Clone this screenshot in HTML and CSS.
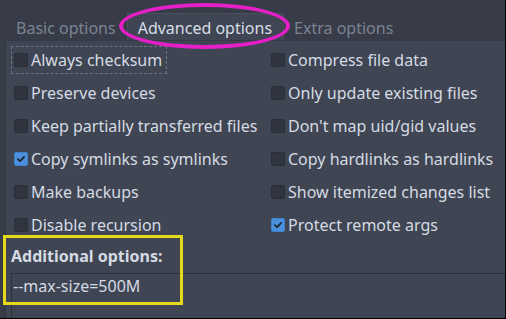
FILE: index.html
```html
<!DOCTYPE html>
<html>
<head>
<meta charset="utf-8">
<link rel="stylesheet" href="styles.css">
</head>
<body>
<div class="app">
  <div class="tabs">
    <div class="tab">Basic options</div>
    <div class="tab active">Advanced options</div>
    <div class="tab">Extra options</div>
  </div>
  <div class="panel">
    <div class="grid">
      <label class="opt focus"><span class="box"></span>Always checksum</label>
      <label class="opt"><span class="box"></span>Compress file data</label>
      <label class="opt"><span class="box"></span>Preserve devices</label>
      <label class="opt"><span class="box"></span>Only update existing files</label>
      <label class="opt"><span class="box"></span>Keep partially transferred files</label>
      <label class="opt"><span class="box"></span>Don't map uid/gid values</label>
      <label class="opt"><span class="box checked"><svg viewBox="0 0 14 14"><path d="M3.5 7.2 L6 9.6 L10.6 4.6" /></svg></span>Copy symlinks as symlinks</label>
      <label class="opt"><span class="box"></span>Copy hardlinks as hardlinks</label>
      <label class="opt"><span class="box"></span>Make backups</label>
      <label class="opt"><span class="box"></span>Show itemized changes list</label>
      <label class="opt"><span class="box"></span>Disable recursion</label>
      <label class="opt"><span class="box checked"><svg viewBox="0 0 14 14"><path d="M3.5 7.2 L6 9.6 L10.6 4.6" /></svg></span>Protect remote args</label>
    </div>
    <div class="addl">Additional options:</div>
    <div class="field">--max-size=500M</div>
  </div>
  <div class="mark-ellipse"></div>
  <div class="mark-rect"></div>
</div>
</body>
</html>
```
FILE: styles.css
```css
html, body {
  margin: 0;
  padding: 0;
  background: #000;
}
.app {
  position: relative;
  width: 505px;
  height: 318px;
  background: #373c48;
  overflow: hidden;
  font-family: "Noto Sans", "DejaVu Sans", sans-serif;
  font-size: 16px;
  color: #d5dbe4;
  display: flex;
  flex-direction: column;
}
.tabs {
  display: flex;
  height: 40px;
  padding-left: 6px;
  align-items: flex-end;
  box-sizing: border-box;
}
.tab {
  height: 27px;
  padding: 3px 10px 0;
  line-height: 24px;
  color: #7c8392;
  box-sizing: border-box;
  white-space: nowrap;
}
.tab.active {
  margin-left: 1px;
  padding: 3px 11px 0 10px;
  line-height: 23px;
  color: #d8dee7;
  background: #3f4552;
  border: 1px solid #4a505d;
  border-bottom: none;
}
.panel {
  flex: 1;
  margin-left: 5px;
  background: #3f4552;
  border-left: 1px solid #30353f;
  border-top: 1px solid #353a45;
  padding: 2px 0 0 5px;
  display: flex;
  flex-direction: column;
}
.grid {
  display: grid;
  grid-template-columns: 257px 1fr;
  grid-auto-rows: 33px;
}
.opt {
  display: flex;
  align-items: center;
  align-self: center;
  justify-self: start;
  height: 28px;
  padding: 0 4px 0 2px;
  border: 1px dashed transparent;
  box-sizing: border-box;
  white-space: nowrap;
}
.opt.focus {
  border-color: #6c727e;
}
.box {
  width: 14px;
  height: 14px;
  margin-right: 3px;
  border-radius: 2px;
  background: #2f343f;
  border: 1px solid #2a2e37;
  box-sizing: border-box;
  display: flex;
}
.box.checked {
  background: #4a90dd;
  border-color: #3f82cc;
}
.box svg {
  width: 12px;
  height: 12px;
}
.box svg path {
  fill: none;
  stroke: #1d2229;
  stroke-width: 2;
  stroke-linecap: round;
  stroke-linejoin: round;
}
.addl {
  font-weight: bold;
  margin: 0;
  height: 32px;
  line-height: 30px;
}
.field {
  flex: 1;
  border-top: 1px solid #2c3039;
  border-left: 1px solid #2c3039;
  padding: 1px 0 0 1px;
  line-height: 22px;
}
.mark-ellipse {
  position: absolute;
  left: 119px;
  top: 3px;
  width: 171px;
  height: 46px;
  border: 4px solid #e41fc8;
  border-radius: 50%;
  box-sizing: border-box;
}
.mark-rect {
  position: absolute;
  left: 3px;
  top: 235px;
  width: 180px;
  height: 70px;
  border: 3px solid #e6d81c;
  box-sizing: border-box;
}
```
